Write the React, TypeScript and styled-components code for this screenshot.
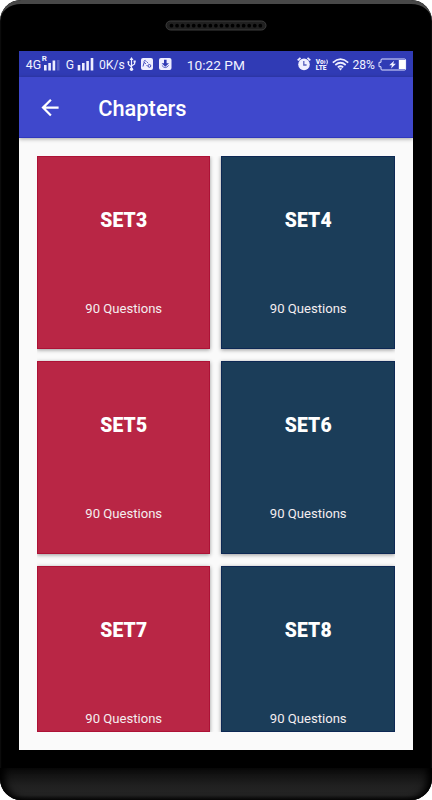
import React from "react";
import styled, { createGlobalStyle } from "styled-components";

const GlobalStyle = createGlobalStyle`
  * { box-sizing: border-box; }
  body { margin: 0; background: #fff; font-family: Roboto, "Liberation Sans", sans-serif; }
`;

const Phone = styled.div`
  width: 432px;
  height: 800px;
  border-radius: 21px;
  background: #000;
  overflow: hidden;
  display: flex;
  flex-direction: column;
  align-items: center;
  box-shadow: inset 0 0 2px #2a2a2a;
`;

const TopBezel = styled.div`
  flex: none;
  width: 432px;
  height: 51px;
  display: flex;
  justify-content: center;
  padding-top: 16px;
  border-top: 4px solid #484848;
  border-radius: 21px 21px 0 0;
`;

const Speaker = styled.svg`
  width: 102px;
  height: 11px;
  display: block;
`;

const Screen = styled.main`
  flex: none;
  width: 393.4px;
  height: 699px;
  background: #fafafa;
  display: flex;
  flex-direction: column;
`;

const StatusBar = styled.div`
  flex: none;
  height: 26px;
  background: #303bb5;
  color: #f2f3ff;
  display: flex;
  align-items: center;
`;

const Slot = styled.span<{ $w: number; $gap?: number; $size?: number }>`
  flex: none;
  display: block;
  width: ${(p) => p.$w}px;
  margin-left: ${(p) => p.$gap ?? 0}px;
  font-size: ${(p) => p.$size ?? 12}px;
  line-height: 26px;
  height: 26px;
  padding-top: 1px;
  white-space: nowrap;
`;

const Glyph = styled.svg<{ $gap?: number }>`
  flex: none;
  display: block;
  margin-left: ${(p) => p.$gap ?? 0}px;
`;

const Signal = styled.span`
  flex: none;
  display: flex;
  flex-direction: column;
  width: 19px;
  height: 26px;
  padding-top: 6px;
`;

const Roaming = styled.span`
  font-size: 8px;
  line-height: 4px;
  height: 3px;
  font-weight: 700;
`;

const Volte = styled.span`
  flex: none;
  width: 13px;
  margin-left: 5px;
  padding-top: 1px;
  display: flex;
  flex-direction: column;
  font-size: 6.6px;
  line-height: 6px;
  font-weight: 900;
  white-space: nowrap;
`;

const VolteRow = styled.span`
  display: flex;
  height: 6px;
`;

const AppBar = styled.header`
  flex: none;
  height: 61px;
  background: #3f48cc;
  color: #fff;
  border-bottom: 1px solid #3038bd;
  box-shadow: 0 1px 4px rgba(0, 0, 0, 0.35);
  display: flex;
  align-items: center;
`;

const Back = styled.button`
  width: 24px;
  height: 24px;
  margin: 0 36.3px 0 18.7px;
  padding: 0;
  border: 0;
  background: none;
  color: inherit;
`;

const Title = styled.h1`
  margin: 4px 0 0;
  font-size: 21.8px;
  line-height: 28px;
  font-weight: 500;
`;

const Grid = styled.section`
  margin: 18px 17.7px 0;
  height: 576px;
  overflow: hidden;
  display: grid;
  grid-template-columns: 173.5px 173.5px;
  grid-auto-rows: 193px;
  column-gap: 11px;
  row-gap: 12px;
`;

const Card = styled.article<{ $red: boolean; $cut: boolean }>`
  height: ${(p) => (p.$cut ? 166 : 193)}px;
  background: ${(p) => (p.$red ? "#b92645" : "#1b3d59")};
  border: 1px solid ${(p) => (p.$red ? "#ad1236" : "#0d2854")};
  box-shadow: 0 1px 4px rgba(0, 0, 0, 0.4);
  color: #fff;
  display: flex;
  flex-direction: column;
  align-items: center;
`;

const SetName = styled.h2`
  margin: 50px 0 0;
  font-size: 19.3px;
  line-height: 28px;
  font-weight: 900;
  letter-spacing: 0.15px;
`;

const Count = styled.p`
  margin: 64px 0 0;
  font-size: 13.1px;
  line-height: 20px;
  color: #f4eef0;
`;

const BottomBezel = styled.div`
  flex: none;
  width: 432px;
  height: 32px;
  margin-top: 18px;
  border-radius: 0 0 21px 21px;
  background: linear-gradient(#0b0b0b, #202020 55%, #252525 85%, #111);
  box-shadow: inset 7px -1px 7px -2px #000, inset -7px -1px 7px -2px #000;
`;

const Bars = () => (
  <Glyph width="18" height="13" viewBox="0 0 18 13" fill="#eef">
    <rect x="0.7" y="7" width="2.6" height="5.5" />
    <rect x="5" y="5" width="2.6" height="7.5" />
    <rect x="9.3" y="3" width="2.6" height="9.5" />
    <rect x="13.7" y="0" width="2.6" height="12.5" />
  </Glyph>
);

const RoamingBars = () => (
  <Glyph width="19" height="13" viewBox="0 0 19 13" fill="#eef">
    <rect x="2" y="5" width="2.6" height="5.5" />
    <rect x="6.3" y="3" width="2.6" height="7.5" />
    <rect x="10.6" y="0.5" width="2.6" height="10" />
    <rect x="14.9" y="0" width="2.6" height="10.5" opacity="0.22" />
  </Glyph>
);

const Status = () => (
  <StatusBar>
    <Slot $gap={6.5} $w={16} $size={12.4}>4G</Slot>
    <Signal>
      <Roaming>R</Roaming>
      <RoamingBars />
    </Signal>
    <Slot $gap={5} $w={11} $size={12.2}>G</Slot>
    <Bars />
    <Slot $gap={4.2} $w={28} $size={12.2}>0K/s</Slot>
    <Glyph width="9" height="14" viewBox="0 0 9 14" fill="none" stroke="#eef" strokeWidth="1.2">
      <path d="M4.5 2V12M1.4 5V7.5L4.5 10M7.6 4V7L4.5 9" />
      <path d="M4.5 0 6.5 3H2.5Z" fill="#eef" stroke="none" />
      <circle cx="1.4" cy="5" r="1.1" fill="#eef" stroke="none" />
      <path d="M6.5 3.5h2.2v2H6.5z" fill="#eef" stroke="none" />
      <circle cx="4.5" cy="12.2" r="1.7" fill="#eef" stroke="none" />
    </Glyph>
    <Glyph $gap={5.5} width="12" height="12" viewBox="0 0 12 12">
      <rect width="12" height="12" rx="2" fill="#eef" />
      <g fill="none" stroke="#303bb5" strokeWidth="0.9">
        <path d="M2 8.5 3.2 4.2 4.8 6M2.6 3.5 4.2 2.4 5.4 3.8" />
        <circle cx="8.4" cy="7.9" r="1.4" />
        <path d="M5.6 7.2 6.6 8.2M6.2 4.2l1 1" />
      </g>
    </Glyph>
    <Glyph $gap={6} width="13" height="12" viewBox="0 0 13 12">
      <rect width="12.5" height="12" rx="2" fill="#eef" />
      <path d="M5 1.8h2.6v3.4h2.4L6.3 8.8 2.6 5.2H5Z" fill="#303bb5" />
      <path d="M2.9 7.4Q6.3 11.8 9.7 7.4" fill="none" stroke="#303bb5" strokeWidth="0.8" />
    </Glyph>
    <Slot $gap={14.3} $w={61} $size={13.7}>10:22 PM</Slot>
    <Glyph $gap={49} width="14" height="14" viewBox="0 0 14 14">
      <circle cx="7" cy="7.4" r="5.8" fill="#eef" />
      <path d="M.7 3.4 3.5.9M13.3 3.4 10.5.9" stroke="#eef" strokeWidth="1.8" />
      <path d="M6.8 4v4H9.6" fill="none" stroke="#5961be" strokeWidth="1.3" />
    </Glyph>
    <Volte>
      <VolteRow>
        Vo
        <svg width="5" height="6" viewBox="0 0 5 6" fill="none" stroke="#eef" strokeWidth="1">
          <path d="M.6 1.5Q1.4 3 .6 4.7M2.8.6Q4 3 2.8 5.4" />
        </svg>
      </VolteRow>
      <VolteRow>LTE</VolteRow>
    </Volte>
    <Glyph $gap={3} width="17" height="13" viewBox="0 0 17 13" fill="none" stroke="#eef" strokeWidth="1.7">
      <path d="M.8 4.6Q8.5-2.2 16.2 4.6M3.3 7Q8.5 2.5 13.7 7M5.8 9.4Q8.5 7.1 11.2 9.4" />
      <path d="M6.6 10.2h3.8L8.5 12.4Z" fill="#eef" stroke="none" />
    </Glyph>
    <Slot $gap={3.7} $w={24.3} $size={12.1}>28%</Slot>
    <Glyph width="30" height="13" viewBox="0 0 30 13">
      <path d="M5 1h22.6q1 0 1 1v9q0 1-1 1H5q-1 0-1-1V8.7H2V4.3h2V2q0-1 1-1Z" fill="none" stroke="#dfe2ff" />
      <rect x="21.8" y="2" width="6.8" height="9" fill="#fff" />
      <path d="M17.2 2.8 12.2 7.2h2.7l-.8 3.2 4.8-4.7h-2.7Z" fill="#eef" />
    </Glyph>
  </StatusBar>
);

const chapters = ["SET3", "SET4", "SET5", "SET6", "SET7", "SET8"];

export default function App() {
  return (
    <>
      <GlobalStyle />
      <Phone>
        <TopBezel>
          <Speaker viewBox="0 0 102 11">
            <rect x="1" y="1" width="100" height="9" rx="4.5" fill="#202020" stroke="#3c3c3c" />
            {Array.from({ length: 17 }, (_, i) => (
              <circle key={i} cx={6.5 + i * 5.55} cy="5.7" r="1.9" fill="#000" />
            ))}
          </Speaker>
        </TopBezel>
        <Screen>
          <Status />
          <AppBar>
            <Back aria-label="Back">
              <svg width="24" height="24" viewBox="0 0 24 24" fill="none" stroke="#fff" strokeWidth="2.2">
                <path d="M20.6 12.6H5M12.9 4.7 5 12.6l7.9 7.9" />
              </svg>
            </Back>
            <Title>Chapters</Title>
          </AppBar>
          <Grid>
            {chapters.map((name, i) => (
              <Card key={name} $red={i % 2 === 0} $cut={i > 3}>
                <SetName>{name}</SetName>
                <Count>90 Questions</Count>
              </Card>
            ))}
          </Grid>
        </Screen>
        <BottomBezel />
      </Phone>
    </>
  );
}
